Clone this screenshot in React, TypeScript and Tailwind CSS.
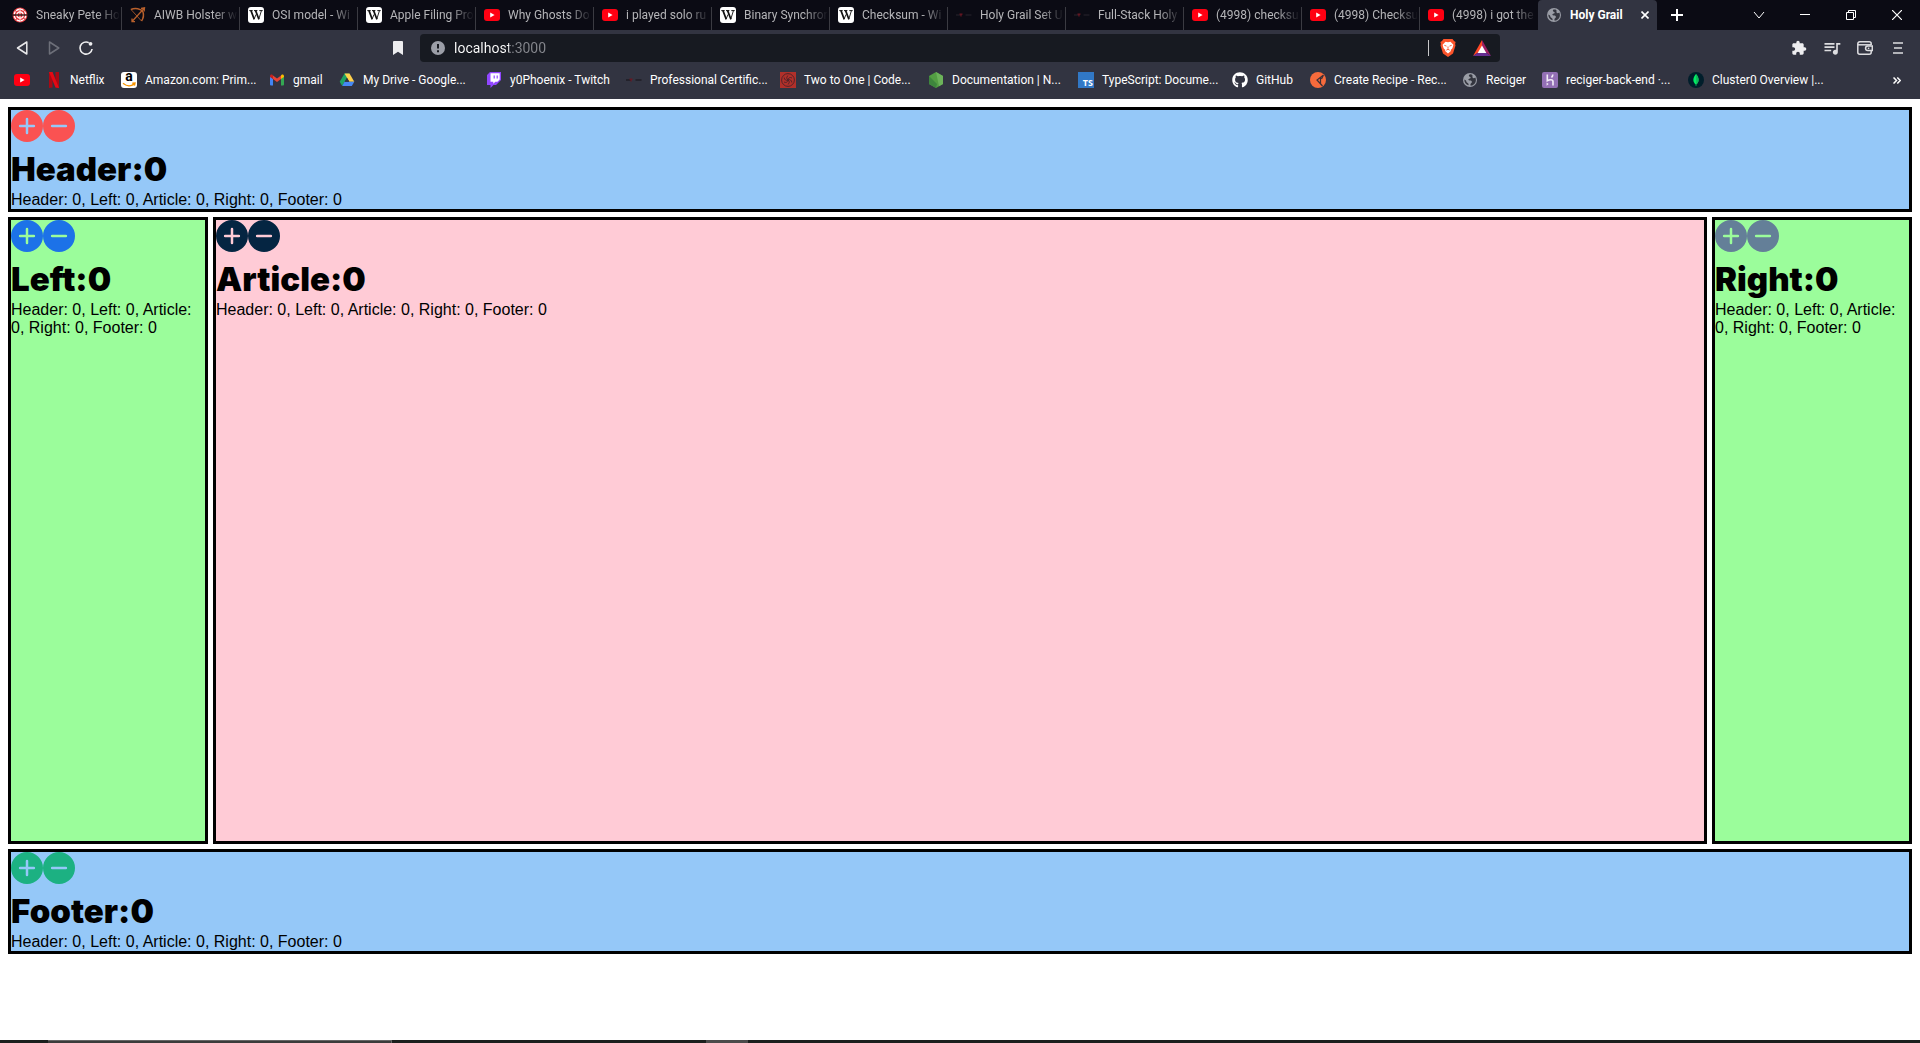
import React, { useState } from "react";
import { FaGithub } from "react-icons/fa";
import { MdExtension, MdQueueMusic } from "react-icons/md";

const YouTube = () => (
  <svg viewBox="0 0 16 16" className="size-4 shrink-0" aria-hidden="true">
    <rect y="2" width="16" height="12" rx="3" fill="#ff0012" />
    <path d="M6.2 5.6v4.8L10.6 8z" fill="#fff" />
  </svg>
);

const Wikipedia = () => (
  <span aria-hidden="true" className="flex size-4 shrink-0 items-center justify-center rounded-[3px] bg-white">
    <svg viewBox="0 0 16 16" className="size-4" fill="none" stroke="#111">
      <path d="M1.3 3.6h3.4M6 3.6h3.4M11.3 3.6h3.4" strokeWidth="1" />
      <path d="M3 3.6l3.2 8.6M7.6 3.6l3.3 8.6" strokeWidth="1.7" />
      <path d="M5.9 12.4l2.2-5M10.7 12.4l2.7-8.6" strokeWidth=".9" />
    </svg>
  </span>
);

const Target = () => (
  <svg viewBox="0 0 16 16" className="size-4 shrink-0" aria-hidden="true">
    <circle cx="8" cy="8" r="7.5" fill="#e33a3f" />
    <circle cx="8" cy="8" r="5.8" fill="none" stroke="#fff" strokeWidth="1.3" strokeDasharray="3.5 1" />
    <circle cx="8" cy="8" r="3.2" fill="none" stroke="#fff" strokeWidth="1.2" />
    <path d="M8 1v14" stroke="#fff" strokeWidth=".9" />
    <path d="M0 8h16" stroke="#211" strokeWidth="1.3" />
  </svg>
);

const Bow = () => (
  <svg viewBox="0 0 16 16" className="size-4 shrink-0" fill="none" stroke="#b8602c" aria-hidden="true">
    <path d="M1 2.5c4-2 10-1 12 2.5 1 3 .5 6-1.5 9" strokeWidth="1.5" />
    <path d="M1 2.5l10.5 11.5" strokeWidth=".8" />
    <path d="M2 14.5L14.5 1M11 1.5l3.5-.6-.4 3.6M2 11.5v3.2h3" strokeWidth="1.3" />
  </svg>
);

const Globe = () => (
  <svg viewBox="0 0 16 16" className="size-4 shrink-0" aria-hidden="true">
    <circle cx="8" cy="8" r="7" fill="#9a9da6" />
    <path
      d="M8.500 2.200c-1.400.4-2 1.100-1.400 2 .6.800 1.700.5 1.600 1.600-.1 1-1.500.8-2.200 1.500-.5.600.2 1.300 1.200 1.200 1.500-.1 2.300.5 2.200 1.500-.1 1.200-1.500 1.300-1.500 2.600l.3 1.200c3-.3 5.200-2.800 5.200-5.800 0-1-.2-1.900-.6-2.600-.8.800-2 1-2.600.3-.7-.9.200-1.700-.3-2.500-.4-.6-1.100-1-1.900-1zM2.300 7.400c0 3 1.600 5 4.200 5.900.4-1.200-.2-1.900-1.200-2.500-1.200-.7-.8-1.800-1.600-2.500z"
      fill="#34363f"
    />
  </svg>
);

const DimMark = () => (
  <svg viewBox="0 0 16 16" className="size-4 shrink-0" aria-hidden="true">
    <path d="M0 8h5M9.500 8h6" stroke="#1f1c24" strokeWidth="1.500" />
    <path d="M3.500 7.200h3M5 7v2.500" stroke="#6b1722" strokeWidth="1.200" />
  </svg>
);

const Netflix = () => (
  <svg viewBox="0 0 16 16" className="size-4 shrink-0" aria-hidden="true">
    <path d="M3 0h3.500v15.500L3 16zM9.500 0H13v16l-3.500-.5z" fill="#a90914" />
    <path d="M3 0h3.500L13 16l-3.500-.5z" fill="#e50914" />
  </svg>
);

const Amazon = () => (
  <span aria-hidden="true" className="relative block size-4 shrink-0 rounded-[3px] bg-white">
    <span className="absolute inset-x-0 -top-1 text-center text-[14px] leading-4 font-bold text-black">a</span>
    <svg viewBox="0 0 16 16" className="absolute inset-0 size-4" fill="none" stroke="#f79400" strokeWidth="1.400">
      <path d="M2 11.300c3.500 3 8 3.200 11 .8M11.300 11.200l2.700-.2-.6 2.600" />
    </svg>
  </span>
);

const Gmail = () => (
  <svg viewBox="0 0 16 16" className="size-4 shrink-0" aria-hidden="true">
    <path d="M1 4.500l3 2.300V13.500H2a1 1 0 0 1-1-1z" fill="#4285f4" />
    <path d="M15 4.500l-3 2.300v6.700h2a1 1 0 0 0 1-1z" fill="#34a853" />
    <path d="M4 3.500l4 3 4-3v3.600l-4 3-4-3z" fill="#ea4335" />
    <path d="M1 4.200c0-1.500 1.600-2 2.600-1.200l.4.400v3.700L1 4.900z" fill="#c5221f" />
    <path d="M15 4.200c0-1.500-1.600-2-2.600-1.200l-.4.400v3.700l3-2.200z" fill="#fbbc04" />
  </svg>
);

const Drive = () => (
  <svg viewBox="0 0 16 16" className="size-4 shrink-0" aria-hidden="true">
    <path d="M5.500 1.500h5L8 5.800 3.200 14 .7 9.800z" fill="#1fa463" />
    <path d="M5.500 1.500h5l4.800 8.300h-5z" fill="#ffd04b" />
    <path d="M5.500 9.800h9.800L12.800 14H3.200z" fill="#4688f4" />
    <path d="M8 5.800l2.300 4H5.700z" fill="#323441" />
  </svg>
);

const Twitch = () => (
  <svg viewBox="0 0 16 16" className="size-4 shrink-0" aria-hidden="true">
    <path d="M4 0L1 3v10h3.500v3l3-3H10l5-5V0z" fill="#9146ff" />
    <path d="M4.500 1.200h9.200v6.300l-2.200 2.200H9.300l-2 2v-2H4.500z" fill="#fff" />
    <path d="M8.200 3.400v3.200M11.200 3.400v3.200" stroke="#9146ff" strokeWidth="1.200" />
  </svg>
);

const Codewars = () => (
  <svg viewBox="0 0 16 16" className="size-4 shrink-0" fill="none" aria-hidden="true">
    <rect width="16" height="16" fill="#b1302a" />
    <g stroke="#4a2128" strokeWidth=".9">
      <circle cx="8" cy="8" r="6.400" />
      <path d="M8 8c0-2 2-3.200 4-2M8 8c1.700-1 3.800.2 3.800 2.500M8 8c1.700 1 1.700 3.500-.2 4.500M8 8c0 2-2 3.200-4 2M8 8c-1.700 1-3.800-.2-3.800-2.500M8 8c-1.700-1-1.700-3.500.2-4.500" />
    </g>
  </svg>
);

const NodeHex = () => (
  <svg viewBox="0 0 16 16" className="size-4 shrink-0" aria-hidden="true">
    <path d="M8 0l7 4v8l-7 4-7-4V4z" fill="#539e43" />
    <path d="M8 0l7 4v8l-4 2.300z" fill="#6cb35a" />
    <path d="M1 4v8l7 4 1-4z" fill="#3e863d" />
  </svg>
);

const TypeScript = () => (
  <span
    aria-hidden="true"
    className="flex size-4 shrink-0 items-end justify-end bg-[#3178c6] pr-px font-['Open_Sans'] text-[9px] leading-[10px] font-bold text-white"
  >
    TS
  </span>
);

const Recipe = () => (
  <svg viewBox="0 0 16 16" className="size-4 shrink-0" aria-hidden="true">
    <circle cx="8" cy="8" r="8" fill="#f76b3c" />
    <path d="M13.500 3L7 8l5.500 6M10.500 5.500v6M13.500 3l-2 4" fill="none" stroke="#3a3038" strokeWidth="1.200" />
  </svg>
);

const Heroku = () => (
  <svg viewBox="0 0 16 16" className="size-4 shrink-0" aria-hidden="true">
    <rect width="16" height="16" rx="2" fill="#9370b5" />
    <path
      d="M5.300 2.500v6.200c2-1 5.700-1.700 5.700.8v4M10.800 2.500c0 1.200-.5 2.200-1.300 3"
      fill="none"
      stroke="#f3edf8"
      strokeWidth="1.600"
    />
    <path d="M4.600 10.500l2 1.600-2 1.700z" fill="#f3edf8" />
  </svg>
);

const Mongo = () => (
  <svg viewBox="0 0 16 16" className="size-4 shrink-0" aria-hidden="true">
    <circle cx="8" cy="8" r="8" fill="#001e2b" />
    <path d="M8 2c3.600 4 3.300 8 .3 10.500V14h-.6v-1.500C4.700 10 4.400 6 8 2z" fill="#00ed64" />
    <path d="M8 2c3.600 4 3.300 8 .3 10.500z" fill="#12b75a" />
  </svg>
);

const GitHub = () => <FaGithub className="size-4 shrink-0 text-white" aria-hidden="true" />;

const tabs = [
  { Icon: Target, label: "Sneaky Pete Ho" },
  { Icon: Bow, label: "AIWB Holster w" },
  { Icon: Wikipedia, label: "OSI model - Wi" },
  { Icon: Wikipedia, label: "Apple Filing Pro" },
  { Icon: YouTube, label: "Why Ghosts Do" },
  { Icon: YouTube, label: "i played solo ru" },
  { Icon: Wikipedia, label: "Binary Synchror" },
  { Icon: Wikipedia, label: "Checksum - Wi" },
  { Icon: DimMark, label: "Holy Grail Set U" },
  { Icon: DimMark, label: "Full-Stack Holy" },
  { Icon: YouTube, label: "(4998) checksu" },
  { Icon: YouTube, label: "(4998) Checksu" },
  { Icon: YouTube, label: "(4998) i got the" },
];

const bookmarks = [
  { Icon: YouTube, label: "", width: "w-[32px]" },
  { Icon: Netflix, label: "Netflix", width: "w-[75px]" },
  { Icon: Amazon, label: "Amazon.com: Prim...", width: "w-[148px]" },
  { Icon: Gmail, label: "gmail", width: "w-[70px]" },
  { Icon: Drive, label: "My Drive - Google...", width: "w-[147px]" },
  { Icon: Twitch, label: "y0Phoenix - Twitch", width: "w-[140px]" },
  { Icon: DimMark, label: "Professional Certific...", width: "w-[154px]" },
  { Icon: Codewars, label: "Two to One | Code...", width: "w-[148px]" },
  { Icon: NodeHex, label: "Documentation | N...", width: "w-[150px]" },
  { Icon: TypeScript, label: "TypeScript: Docume...", width: "w-[154px]" },
  { Icon: GitHub, label: "GitHub", width: "w-[78px]" },
  { Icon: Recipe, label: "Create Recipe - Rec...", width: "w-[152px]" },
  { Icon: Globe, label: "Reciger", width: "w-[80px]" },
  { Icon: Heroku, label: "reciger-back-end ·...", width: "w-[146px]" },
  { Icon: Mongo, label: "Cluster0 Overview |...", width: "w-[146px]" },
];

function TabStrip() {
  return (
    <div className="flex h-[30px] items-stretch bg-[#0b0b14] pl-1">
      <div role="tablist" aria-label="Open tabs" className="flex">
        {tabs.map(({ Icon, label }, i) => (
          <button
            key={i}
            role="tab"
            aria-selected="false"
            className={
              i === tabs.length - 1
                ? "flex w-[118px] items-center gap-2 pl-2 text-[#b5b5b8]"
                : "flex w-[118px] items-center gap-2 bg-[linear-gradient(#3b3b42,#3b3b42)] bg-[length:1px_23px] bg-right-bottom bg-no-repeat pl-2 text-[#b5b5b8]"
            }
          >
            <Icon />
            <span className="w-[84px] whitespace-nowrap text-left [mask-image:linear-gradient(90deg,#000_60px,transparent)]">
              {label}
            </span>
          </button>
        ))}
        <div className="flex w-[119px] items-center rounded-t bg-[#323441] pl-2 text-white">
          <button role="tab" aria-selected="true" className="flex flex-1 items-center gap-2 font-bold whitespace-nowrap">
            <Globe />
            Holy Grail
          </button>
          <button aria-label="Close tab" className="mr-1 flex size-4 items-center justify-center">
            <svg viewBox="0 0 8 8" className="size-2" stroke="currentColor" strokeWidth="1.600">
              <path d="M.5.500l7 7M7.500.500l-7 7" />
            </svg>
          </button>
        </div>
      </div>
      <button aria-label="New tab" className="ml-2 flex w-6 items-center justify-center">
        <svg viewBox="0 0 12 12" className="size-3" stroke="#fff" strokeWidth="2">
          <path d="M6 0v12M0 6h12" />
        </svg>
      </button>
      <div className="ml-auto flex text-white">
        <button aria-label="Search tabs" className="flex w-[46px] items-center justify-center">
          <svg viewBox="0 0 12 12" className="size-3" fill="none" stroke="currentColor">
            <path d="M1 3l5 6 5-6" />
          </svg>
        </button>
        <button aria-label="Minimize" className="flex w-[46px] items-center justify-center">
          <svg viewBox="0 0 10 10" className="size-2.5" stroke="currentColor">
            <path d="M0 4.500h10" />
          </svg>
        </button>
        <button aria-label="Restore" className="flex w-[46px] items-center justify-center">
          <svg viewBox="0 0 10 10" className="size-2.5" fill="none" stroke="currentColor">
            <path d="M.5 2.500h7v7h-7zM2.500 2.500v-2h7v7h-2" />
          </svg>
        </button>
        <button aria-label="Close window" className="flex w-[46px] items-center justify-center">
          <svg viewBox="0 0 10 10" className="size-2.5" stroke="currentColor" strokeWidth="1.200">
            <path d="M0 0l10 10M10 0L0 10" />
          </svg>
        </button>
      </div>
    </div>
  );
}

function Toolbar() {
  return (
    <div className="grid h-9 grid-cols-[1fr_56.25%_1fr] items-center">
      <div className="flex items-center pr-3 pl-[14px]">
        <button aria-label="Back" className="mr-4 flex size-4 items-center justify-center">
          <svg viewBox="0 0 16 16" className="size-4" fill="none" stroke="#e8e8ea" strokeWidth="1.500" strokeLinejoin="round">
            <path d="M12.800 2v12L3.500 8z" />
          </svg>
        </button>
        <button aria-label="Forward" className="mr-4 flex size-4 items-center justify-center">
          <svg viewBox="0 0 16 16" className="size-4" fill="none" stroke="#6d6f79" strokeWidth="1.500" strokeLinejoin="round">
            <path d="M3.500 2v12L12.800 8z" />
          </svg>
        </button>
        <button aria-label="Reload" className="flex size-4 items-center justify-center">
          <svg viewBox="0 0 16 16" className="size-4" fill="none" stroke="#eeeef0" strokeWidth="1.600">
            <path d="M10.800 2.600A6.100 6.100 0 1 0 14.100 9" />
            <circle cx="12.500" cy="3.800" r="1.900" fill="#eeeef0" stroke="none" />
          </svg>
        </button>
        <button aria-label="Bookmark this page" className="ml-auto flex size-5 items-center justify-center">
          <svg viewBox="0 0 10 14" className="h-[14px] w-2.5" fill="#ededef">
            <path d="M1 0h8a1 1 0 0 1 1 1v13l-5-3.200L0 14V1a1 1 0 0 1 1-1z" />
          </svg>
        </button>
      </div>
      <div className="flex h-7 items-center rounded bg-[#171a21] pr-[9px] pl-[11px]">
        <svg viewBox="0 0 14 14" className="size-[14px] shrink-0" aria-label="Site information" role="img">
          <circle cx="7" cy="7" r="7" fill="#9b9ea7" />
          <path d="M7 3v4.500M7 9.300v1.900" stroke="#171a21" strokeWidth="2" />
        </svg>
        <div className="ml-[9px] flex flex-1">
          <input
            aria-label="Address"
            defaultValue="localhost:3000"
            className="w-full bg-[linear-gradient(90deg,#fff_55px,#85878d_55px)] bg-clip-text text-sm text-transparent outline-none"
          />
        </div>
        <span className="mr-[11px] h-4 w-px bg-[#c8c8ca]" />
        <button aria-label="Brave Shields" className="mr-[17px] flex">
          <svg viewBox="0 0 16 18" className="h-[18px] w-4">
            <path d="M3.500 0h9l1.500 2 1.600 1-.5 2 .4 1.500-2.500 8L8 18l-5-3.500-2.500-8L.9 5 .4 3 2 2z" fill="#fb542b" />
            <path
              d="M8 3.300l2.500-.5 2.900 3-1 3.400-1.700 1.700.2 1.200L8 14.500 5.100 12.100l.2-1.200-1.700-1.700-1-3.400 2.900-3z"
              fill="#fff"
            />
            <path
              d="M4.300 6.300l2.200.8M11.700 6.300l-2.200.8M8 7.500v2.300M6.300 11.200L8 10.300l1.700.9"
              stroke="#fb542b"
              strokeWidth=".9"
              fill="none"
            />
          </svg>
        </button>
        <button aria-label="Brave Rewards" className="flex">
          <svg viewBox="0 0 18 16" className="h-4 w-[18px]">
            <path d="M9 0L0 16l9-6z" fill="#ff4724" />
            <path d="M9 0l9 16-9-6z" fill="#9e1f63" />
            <path d="M0 16h18l-9-6z" fill="#662d91" />
            <path d="M9 5.500l4.300 7.500H4.700z" fill="#fff" />
          </svg>
        </button>
      </div>
      <div className="flex items-center justify-end gap-[15px] pr-3 text-[#dddde0]">
        <button aria-label="Extensions" className="flex text-[#ededef]">
          <MdExtension className="size-4" />
        </button>
        <button aria-label="Media controls" className="flex">
          <MdQueueMusic className="size-5" />
        </button>
        <button aria-label="Wallet" className="flex">
          <svg viewBox="0 0 16 14" className="h-[14px] w-4" fill="none" stroke="currentColor" strokeWidth="1.500">
            <path d="M14.200 4V2.800a2 2 0 0 0-2-2H2.800a2 2 0 0 0-2 2v8.400a2 2 0 0 0 2 2h9.400a2 2 0 0 0 2-2V10" />
            <path d="M1 3.800h13.200" />
            <path d="M15.300 5v4.500h-4.500a2.200 2.200 0 0 1 0-4.500z" />
            <path d="M10.800 7.300h1.500" />
          </svg>
        </button>
        <button aria-label="Menu" className="flex size-5 items-center justify-center">
          <svg viewBox="0 0 10 12" className="h-3 w-2.5" stroke="currentColor" strokeWidth="1.400">
            <path d="M0 1h10M1 6h8M0 11h10" />
          </svg>
        </button>
      </div>
    </div>
  );
}

function BookmarksBar() {
  return (
    <nav aria-label="Bookmarks" className="flex h-[33px] items-center pb-[5px] pl-[14px] text-white">
      {bookmarks.map(({ Icon, label, width }, i) => (
        <span key={i} className={"flex " + width}>
          <a href="#" aria-label={label || "YouTube"} className="flex items-center gap-2 whitespace-nowrap">
            <Icon />
            {label}
          </a>
        </span>
      ))}
      <button aria-label="More bookmarks" className="mr-[19px] ml-auto flex">
        <svg viewBox="0 0 8 7" className="h-[7px] w-2" fill="none" stroke="currentColor" strokeWidth="1.500">
          <path d="M.5.500L3.500 3.500.5 6.500M4.300.500l3 3-3 3" />
        </svg>
      </button>
    </nav>
  );
}

const names = ["Header", "Left", "Article", "Right", "Footer"] as const;
type Name = (typeof names)[number];
type Counts = Record<Name, number>;

type PanelProps = {
  name: Name;
  counts: Counts;
  change: (name: Name, delta: number) => void;
  className: string;
  iconColor: string;
};

function Panel({ name, counts, change, className, iconColor }: PanelProps) {
  return (
    <section className={"border-[3px] border-black " + className}>
      <div className={"mb-1.5 flex " + iconColor}>
        <button aria-label={"Add to " + name} onClick={() => change(name, 1)}>
          <svg viewBox="0 0 32 32" className="size-8">
            <path
              fill="currentColor"
              d="M16 0a16 16 0 1 0 0 32a16 16 0 0 0 0-32zm6.900 17.250h-5.650v5.650a1.250 1.250 0 0 1-2.500 0v-5.650H9.100a1.250 1.250 0 0 1 0-2.500h5.650V9.100a1.250 1.250 0 0 1 2.500 0v5.650h5.650a1.250 1.250 0 0 1 0 2.500z"
            />
          </svg>
        </button>
        <button aria-label={"Subtract from " + name} onClick={() => change(name, -1)}>
          <svg viewBox="0 0 32 32" className="size-8">
            <path
              fill="currentColor"
              d="M16 0a16 16 0 1 0 0 32a16 16 0 0 0 0-32zm6.900 17.250H9.100a1.250 1.250 0 0 1 0-2.500h13.800a1.250 1.250 0 0 1 0 2.500z"
            />
          </svg>
        </button>
      </div>
      <h1 className="font-['Inter',sans-serif] text-[33px] leading-[43px] font-black">
        {name}:{counts[name]}
      </h1>
      <p className="text-base leading-[18px]">{names.map((n) => `${n}: ${counts[n]}`).join(", ")}</p>
    </section>
  );
}

export default function App() {
  const [counts, setCounts] = useState<Counts>({ Header: 0, Left: 0, Article: 0, Right: 0, Footer: 0 });
  const change = (name: Name, delta: number) => setCounts((c) => ({ ...c, [name]: c[name] + delta }));
  const shared = { counts, change };

  return (
    <div className="flex min-h-screen flex-col bg-white">
      <div className="bg-[#323441] font-['Roboto',sans-serif] text-xs">
        <TabStrip />
        <Toolbar />
        <BookmarksBar />
      </div>
      <main className="flex flex-1 flex-col gap-[5px] px-2 pt-2 pb-[86px] font-['Liberation_Sans',sans-serif] text-black">
        <Panel name="Header" {...shared} className="bg-[#95c8f8]" iconColor="text-[#fa5252]" />
        <div className="grid flex-1 grid-cols-[200px_1fr_200px] gap-[5px]">
          <Panel name="Left" {...shared} className="bg-[#9bfd9b]" iconColor="text-[#1c72e8]" />
          <Panel name="Article" {...shared} className="bg-[#ffcbd6]" iconColor="text-[#052542]" />
          <Panel name="Right" {...shared} className="bg-[#9bfd9b]" iconColor="text-[#647f98]" />
        </div>
        <Panel name="Footer" {...shared} className="bg-[#95c8f8]" iconColor="text-[#1cb182]" />
      </main>
      <div className="flex h-[3px] bg-[#1b1f1d]">
        <span className="ml-12 w-[344px] border-t border-r border-[#666] bg-[#3b3b3b]" />
        <span className="ml-[314px] w-[42px] bg-[#4b4b4b]" />
      </div>
    </div>
  );
}
